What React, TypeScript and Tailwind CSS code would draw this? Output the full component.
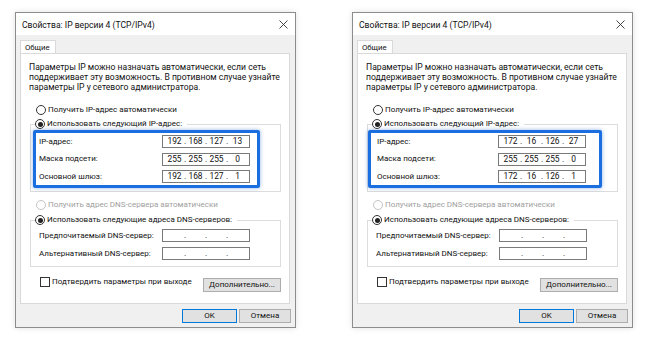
import { Fragment } from 'react'

type DialogProps = {
  ip: string[]
  mask: string[]
  gateway: string[]
  boxMl: string
  boxW: string
  boxPl: string
  labelW: string
}

function Radio({ checked, disabled }: { checked?: boolean; disabled?: boolean }) {
  return (
    <span
      className={
        'flex h-[10px] w-[10px] shrink-0 items-center justify-center rounded-full border bg-white ' +
        (disabled ? 'border-[#c4c4c4]' : 'border-[#333333]')
      }
    >
      {checked && <span className="h-[5px] w-[5px] rounded-full bg-[#222222]" />}
    </span>
  )
}

function IpField({ value }: { value?: string[] }) {
  const parts = value ?? ['', '', '', '']
  return (
    <div className="flex h-[13px] w-[88px] shrink-0 items-center border border-[#7a7a7a] bg-white px-[3px] text-[8.4px] leading-none">
      {parts.map((p, i) => (
        <Fragment key={i}>
          {i > 0 && <span className="w-[4px] text-center">.</span>}
          <span className="w-[17px] text-center">{p}</span>
        </Fragment>
      ))}
    </div>
  )
}

function Row({ label, value, labelW }: { label: string; value?: string[]; labelW: string }) {
  return (
    <div className="flex h-[13px] items-center">
      <span className={labelW}>{label}</span>
      <IpField value={value} />
    </div>
  )
}

function Dialog({ ip, mask, gateway, boxMl, boxW, boxPl, labelW }: DialogProps) {
  return (
    <div className="flex h-[316px] w-[281px] shrink-0 flex-col border border-[#8c8c8c] bg-[#f0f0f0] shadow-[0_0_6px_rgba(0,0,0,0.12)]">
      {/* title bar */}
      <div className="flex h-[22px] items-center justify-between bg-white pl-[6px] pr-[7px]">
        <span className="pt-px text-[8.6px]">Свойства: IP версии 4 (TCP/IPv4)</span>
        <svg width="9" height="9" viewBox="0 0 9 9" className="text-[#333333]">
          <path d="M0.5 0.5 L8.5 8.5 M8.5 0.5 L0.5 8.5" stroke="currentColor" strokeWidth="0.9" />
        </svg>
      </div>

      {/* tabs */}
      <div className="ml-[4px] mt-[5px] flex">
        <div className="flex h-[14px] w-[36px] items-center border border-b-0 border-[#d9d9d9] bg-white pl-[4px] text-[7.8px]">
          Общие
        </div>
      </div>

      {/* panel */}
      <div className="-mt-px ml-[4px] mr-[5px] flex h-[251px] flex-col border border-[#d9d9d9] bg-white pt-[8px]">
        <p className="pl-[8px] text-[8.6px] leading-[10px]">
          Параметры IP можно назначать автоматически, если сеть
          <br />
          поддерживает эту возможность. В противном случае узнайте
          <br />
          параметры IP у сетевого администратора.
        </p>

        <div className="ml-[15px] mt-[13px] flex h-[10px] items-center gap-[2px]">
          <Radio />
          <span>Получить IP-адрес автоматически</span>
        </div>

        <fieldset className="ml-[9px] mt-[4px] w-[251px] border border-[#dcdcdc] pb-[3px]">
          <legend className="ml-[4px] pr-[5px]">
            <span className="flex h-[10px] items-center gap-[2px]">
              <Radio checked />
              <span>Использовать следующий IP-адрес:</span>
            </span>
          </legend>
          <div
            className={
              'mt-[1px] flex flex-col gap-[4.5px] rounded-[2px] border-[3px] border-[#1a6ee0] py-[2px] shadow-[0_0_4px_rgba(20,90,200,0.45)] ' +
              boxMl + ' ' + boxW + ' ' + boxPl
            }
          >
            <Row label="IP-адрес:" value={ip} labelW={labelW} />
            <Row label="Маска подсети:" value={mask} labelW={labelW} />
            <Row label="Основной шлюз:" value={gateway} labelW={labelW} />
          </div>
        </fieldset>

        <div className="ml-[15px] mt-[8px] flex h-[10px] items-center gap-[2px] text-[#a0a0a0]">
          <Radio disabled />
          <span>Получить адрес DNS-сервера автоматически</span>
        </div>

        <fieldset className="ml-[9px] mt-[5px] w-[251px] border border-[#dcdcdc] pb-[6px]">
          <legend className="ml-[4px] pr-[5px]">
            <span className="flex h-[10px] items-center gap-[2px]">
              <Radio checked />
              <span>Использовать следующие адреса DNS-серверов:</span>
            </span>
          </legend>
          <div className="mt-[4px] flex flex-col gap-[5px] pl-[8px]">
            <Row label="Предпочитаемый DNS-сервер:" labelW="w-[123px]" />
            <Row label="Альтернативный DNS-сервер:" labelW="w-[123px]" />
          </div>
        </fieldset>

        <div className="ml-[19px] mr-[8px] mt-[10px] flex items-start justify-between">
          <div className="flex h-[10px] items-center gap-[2px]">
            <span className="h-[10px] w-[10px] border border-[#333333] bg-white" />
            <span>Подтвердить параметры при выходе</span>
          </div>
          <button className="mt-[1px] flex h-[14px] w-[78px] items-center justify-center border border-[#adadad] bg-[#e1e1e1]">
            Дополнительно...
          </button>
        </div>
      </div>

      {/* buttons */}
      <div className="mr-[4px] mt-[5px] flex justify-end gap-[2px]">
        <button className="flex h-[14px] w-[55px] items-center justify-center border border-[#0078d7] bg-[#e1e1e1]">
          OK
        </button>
        <button className="flex h-[14px] w-[52px] items-center justify-center border border-[#adadad] bg-[#e1e1e1]">
          Отмена
        </button>
      </div>
    </div>
  )
}

export default function App() {
  return (
    <div className="flex h-[346px] w-[648px] gap-[56px] whitespace-nowrap bg-white pl-[15px] pt-[12px] font-['Roboto',sans-serif] text-[8px] leading-[10px] text-[#111111]">
      <Dialog
        ip={['192', '168', '127', '13']}
        mask={['255', '255', '255', '0']}
        gateway={['192', '168', '127', '1']}
        boxMl="ml-[2px]"
        boxW="w-[227px]"
        boxPl="pl-[3px]"
        labelW="w-[123px]"
      />
      <Dialog
        ip={['172', '16', '126', '27']}
        mask={['255', '255', '255', '0']}
        gateway={['172', '16', '126', '1']}
        boxMl="ml-0"
        boxW="w-[234px]"
        boxPl="pl-[6px]"
        labelW="w-[121px]"
      />
    </div>
  )
}
